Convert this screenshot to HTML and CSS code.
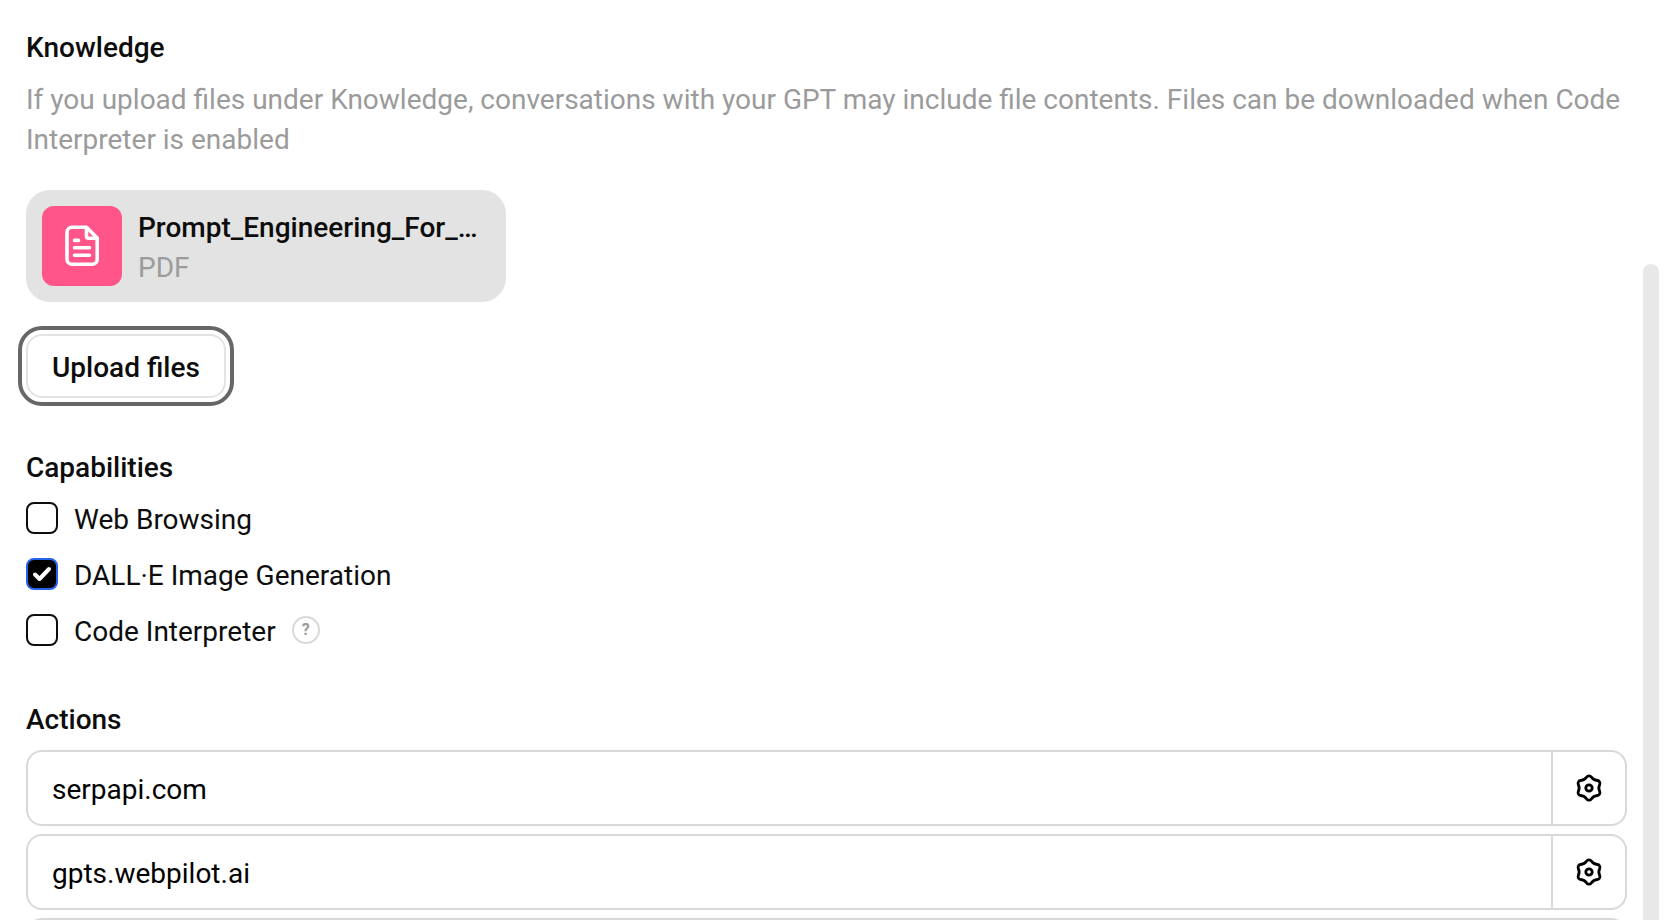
FILE: index.html
```html
<!DOCTYPE html>
<html lang="en">
<head>
  <meta charset="UTF-8" />
  <meta name="viewport" content="width=device-width, initial-scale=1.0"/>
  <title>GPT Builder – Configure</title>
  <link rel="stylesheet" href="styles.css">
</head>
<body>

  <svg class="sprite" aria-hidden="true">
    <symbol id="gear" viewBox="0 0 28 28">
      <path d="M11.67 3.04A2.8 2.8 0 0 1 16.33 3.04A7.9 7.9 0 0 0 22.32 6.51A2.8 2.8 0 0 1 24.65 10.54A7.9 7.9 0 0 0 24.65 17.46A2.8 2.8 0 0 1 22.32 21.49A7.9 7.9 0 0 0 16.33 24.96A2.8 2.8 0 0 1 11.67 24.96A7.9 7.9 0 0 0 5.68 21.49A2.8 2.8 0 0 1 3.35 17.46A7.9 7.9 0 0 0 3.35 10.54A2.8 2.8 0 0 1 5.68 6.51A7.9 7.9 0 0 0 11.67 3.04Z" />
      <circle cx="14" cy="14" r="3.2" />
    </symbol>
  </svg>

  <div class="panel">
    <main class="content">

      <section class="section">
        <h2>Knowledge</h2>
        <p class="hint">If you upload files under Knowledge, conversations with your GPT may include file contents. Files can be downloaded when Code Interpreter is enabled</p>

        <div class="file-card">
          <svg class="file-icon" viewBox="0 0 80 80" aria-hidden="true">
            <path d="M44.5 21.2H30a5 5 0 0 0-5 5v27a5 5 0 0 0 5 5h20.2a5 5 0 0 0 5-5V32Z" />
            <path d="M44.5 21.5v8.8a2 2 0 0 0 2 2h8.5" />
            <path d="M32.5 34.4h4M32.5 41.8h15M32.5 49.2h15" />
          </svg>
          <div class="file-info">
            <div class="file-name">Prompt_Engineering_For_…</div>
            <div class="file-type">PDF</div>
          </div>
        </div>

        <button type="button" class="upload-btn">Upload files</button>
      </section>

      <section class="section">
        <h2>Capabilities</h2>
        <div class="options">
          <div class="option">
            <span class="check">
              <input type="checkbox" id="browsing" />
              <svg viewBox="0 0 32 32" aria-hidden="true"><path d="M9 16.5l4.5 4.5L23 11" /></svg>
            </span>
            <label for="browsing">Web Browsing</label>
          </div>
          <div class="option">
            <span class="check">
              <input type="checkbox" id="dalle" checked />
              <svg viewBox="0 0 32 32" aria-hidden="true"><path d="M9 16.5l4.5 4.5L23 11" /></svg>
            </span>
            <label for="dalle">DALL·E Image Generation</label>
          </div>
          <div class="option">
            <span class="check">
              <input type="checkbox" id="interpreter" />
              <svg viewBox="0 0 32 32" aria-hidden="true"><path d="M9 16.5l4.5 4.5L23 11" /></svg>
            </span>
            <label for="interpreter">Code Interpreter</label>
            <button type="button" class="help">?</button>
          </div>
        </div>
      </section>

      <section class="section">
        <h2>Actions</h2>
        <div class="actions">
          <div class="action">
            <div class="action-name">serpapi.com</div>
            <button type="button" class="action-btn" aria-label="Settings for serpapi.com"><svg><use href="#gear" /></svg></button>
          </div>
          <div class="action">
            <div class="action-name">gpts.webpilot.ai</div>
            <button type="button" class="action-btn" aria-label="Settings for gpts.webpilot.ai"><svg><use href="#gear" /></svg></button>
          </div>
          <div class="action"></div>
        </div>
      </section>

    </main>
    <div class="scroll-thumb"></div>
  </div>

</body>
</html>
```
FILE: styles.css
```css
* {
  box-sizing: border-box;
}

body {
  margin: 0;
  font-family: Roboto, 'Liberation Sans', sans-serif;
  font-size: 28px;
  line-height: 40px;
  background-color: #fff;
  color: #0d0d0d;
}

button {
  font: inherit;
  color: inherit;
  background: none;
  cursor: pointer;
}

.sprite {
  display: none;
}

.panel {
  display: flex;
  gap: 16px;
  height: 100vh;
  padding: 28px 5px 0 26px;
  overflow: hidden;
}

.content {
  flex: 1;
  min-width: 0;
}

.section {
  margin-bottom: 50px;
}

h2 {
  margin: 0 0 12px;
  font-size: 28px;
  font-weight: 500;
}

.hint {
  margin: 0 0 30px;
  color: #9b9b9b;
}

.file-card {
  display: flex;
  align-items: flex-start;
  gap: 16px;
  width: 480px;
  max-width: 100%;
  margin-bottom: 32px;
  padding: 16px 24px 14px 16px;
  border-radius: 24px;
  background-color: #e3e3e3;
}

.file-icon {
  flex-shrink: 0;
  width: 80px;
  height: 80px;
  border-radius: 12px;
  background-color: #ff5588;
  fill: none;
  stroke: #fff;
  stroke-width: 3.6;
  stroke-linecap: round;
  stroke-linejoin: round;
}

.file-info {
  min-width: 0;
  padding-top: 2px;
}

.file-name {
  overflow: hidden;
  font-weight: 500;
  text-overflow: ellipsis;
  white-space: nowrap;
}

.file-type {
  color: #9b9b9b;
}

.upload-btn {
  display: block;
  padding: 12px 24px 8px;
  border: 2px solid #e3e3e3;
  border-radius: 16px;
  outline: 4px solid #676767;
  outline-offset: 4px;
  font-weight: 500;
}

.options {
  display: flex;
  flex-direction: column;
  gap: 16px;
  margin-top: -2px;
}

.option {
  display: flex;
  align-items: center;
  gap: 16px;
}

.option label {
  padding-top: 4px;
  line-height: 36px;
}

.check {
  display: grid;
  width: 32px;
  height: 32px;
}

.check input,
.check svg {
  grid-area: 1 / 1;
  width: 32px;
  height: 32px;
  margin: 0;
}

.check input {
  appearance: none;
  border: 2px solid #0d0d0d;
  border-radius: 8px;
  background-color: #fff;
}

.check input:checked {
  border-color: #2563eb;
  background-color: #000;
}

.check svg {
  visibility: hidden;
  pointer-events: none;
  fill: none;
  stroke: #fff;
  stroke-width: 4;
  stroke-linecap: round;
  stroke-linejoin: round;
}

.check input:checked + svg {
  visibility: visible;
}

.help {
  width: 28px;
  height: 28px;
  padding: 0;
  border: 2px solid #d9d9d9;
  border-radius: 50%;
  color: #9b9b9b;
  font-size: 16px;
  font-weight: 700;
  line-height: 24px;
}

.actions {
  display: flex;
  flex-direction: column;
  gap: 8px;
  margin-top: -2px;
}

.action {
  display: flex;
  min-height: 76px;
  border: 2px solid #d9d9d9;
  border-radius: 16px;
  color: #000;
}

.action-name {
  flex: 1;
  padding: 18px 24px 14px;
}

.action-btn {
  display: flex;
  align-items: center;
  justify-content: center;
  width: 74px;
  padding: 0;
  border: 0;
  border-left: 2px solid #d9d9d9;
}

.action-btn svg {
  width: 28px;
  height: 28px;
  fill: none;
  stroke: #000;
  stroke-width: 2.8;
  stroke-linejoin: round;
}

.scroll-thumb {
  width: 16px;
  margin-top: 236px;
  border-radius: 8px 8px 0 0;
  background-color: #e8e8e8;
}
```
